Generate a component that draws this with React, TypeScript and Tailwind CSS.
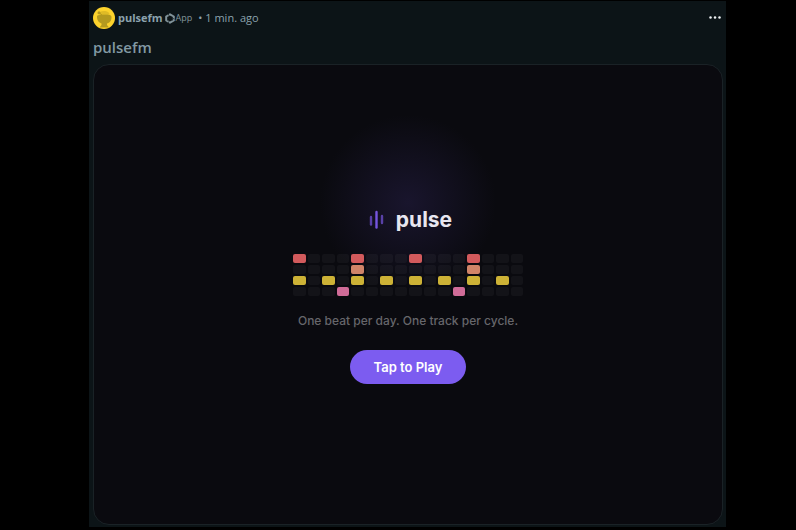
const COLUMNS = 16;

const TRACKS = [
  { name: "kick", color: "bg-[#d25a5c]", steps: [0, 4, 8, 12] },
  { name: "snare", color: "bg-[#d08468]", steps: [4, 12] },
  { name: "hat", color: "bg-[#cdb236]", steps: [0, 2, 4, 6, 8, 10, 12, 14] },
  { name: "clap", color: "bg-[#d06c98]", steps: [3, 11] },
];

function Avatar() {
  return (
    <svg viewBox="0 0 22 22" className="size-[22px] shrink-0" aria-hidden="true">
      <circle cx="11" cy="11" r="11" fill="#fcd22c" />
      <g fill="#b3991f">
        <circle cx="6" cy="5.800" r="1.500" />
        <path d="M6 7.500C6 5 8 4 11 4s5.500 1.500 5.500 3.500z" opacity=".4" />
        <path d="M4 9.500c0-1.500 3-2 7.500-2s7 .5 7 2.500c0 4-2 6-4.500 6.500v1.500l2 2.500H6.500L8.500 18v-1.500C6 15.500 4 13.500 4 9.500z" />
      </g>
      <path d="M6.500 6l3 2.500" fill="none" stroke="#b3991f" />
    </svg>
  );
}

function AppIcon() {
  return (
    <svg viewBox="0 0 10 11" className="h-[11px] w-2.5" aria-hidden="true">
      <path
        d="M5 1.300l3.800 2.200v4L5 9.700 1.200 7.500v-4z"
        fill="none"
        stroke="#82949b"
        strokeWidth="2"
        strokeLinejoin="round"
      />
      <path d="M3.200 1l1 1.800M9.500 6L8 5.500M3.200 10l.8-1.800" stroke="#0c1417" strokeWidth=".7" />
    </svg>
  );
}

function PostHeader() {
  return (
    <header className="flex h-[34px] items-center pr-0.5">
      <Avatar />
      <a href="#pulsefm" className="ml-[3px] text-[11px] leading-4 font-bold text-[#8ba2ad]">
        pulsefm
      </a>
      <span className="ml-0.5 flex items-center gap-px text-[9px] leading-4 text-[#82949b]">
        <AppIcon />
        App
      </span>
      <span className="ml-1.5 text-[11px] leading-4 text-[#8ba2ad]">• 1 min. ago</span>
      <button type="button" aria-label="More options" className="ml-auto">
        <svg viewBox="0 0 12 4" className="h-1 w-3" fill="#eef1f3" aria-hidden="true">
          <circle cx="1.500" cy="1.500" r="1.250" />
          <circle cx="6" cy="1.500" r="1.250" />
          <circle cx="10.500" cy="1.500" r="1.250" />
        </svg>
      </button>
    </header>
  );
}

function Logo() {
  return (
    <div className="flex items-center gap-2">
      <svg
        viewBox="0 0 24 24"
        className="size-6"
        fill="none"
        stroke="#7655df"
        strokeWidth="2.400"
        strokeLinecap="round"
        aria-hidden="true"
      >
        <path d="M7 9v7.500" opacity=".7" />
        <path d="M12.500 4v15.500" />
        <path d="M18 8v7" opacity=".7" />
      </svg>
      <h2 className="text-[21px] leading-7 font-bold text-[#e8e6f0]">pulse</h2>
    </div>
  );
}

function BeatGrid() {
  return (
    <div className="flex w-[230px] flex-col gap-0.5">
      {TRACKS.map((track) => (
        <div key={track.name} className="flex gap-0.5">
          {Array.from({ length: COLUMNS }, (_, step) => (
            <div
              key={step}
              className={`h-[9px] flex-1 rounded-xs ${
                track.steps.includes(step) ? track.color : "bg-white/4"
              }`}
            />
          ))}
        </div>
      ))}
    </div>
  );
}

export default function App() {
  return (
    <div className="flex min-h-screen flex-col bg-black pt-px pr-[70px] pb-[3px] pl-[89px]">
      <article className="flex flex-1 flex-col bg-[#0c1417] pr-[3px] pb-0.5 pl-1 font-['Open_Sans',sans-serif]">
        <PostHeader />
        <h1 className="mb-[5px] text-[15px] leading-6 font-semibold text-[#8299a3]">pulsefm</h1>
        <section className="flex flex-1 flex-col items-center justify-center rounded-2xl border border-[#1a2226] bg-[#0a0a0f] bg-[radial-gradient(circle_88px_at_50%_30%,#19152d,#0a0a0f)] font-['Inter',sans-serif]">
          <Logo />
          <div className="mt-5">
            <BeatGrid />
          </div>
          <p className="mt-4 text-xs leading-[18px] font-medium text-[#66666b]">
            One beat per day. One track per cycle.
          </p>
          <button
            type="button"
            className="mt-5 rounded-full bg-[#7c5cf0] px-6 py-2 text-[13px] leading-[18px] font-semibold text-white"
          >
            Tap to Play
          </button>
        </section>
      </article>
    </div>
  );
}
